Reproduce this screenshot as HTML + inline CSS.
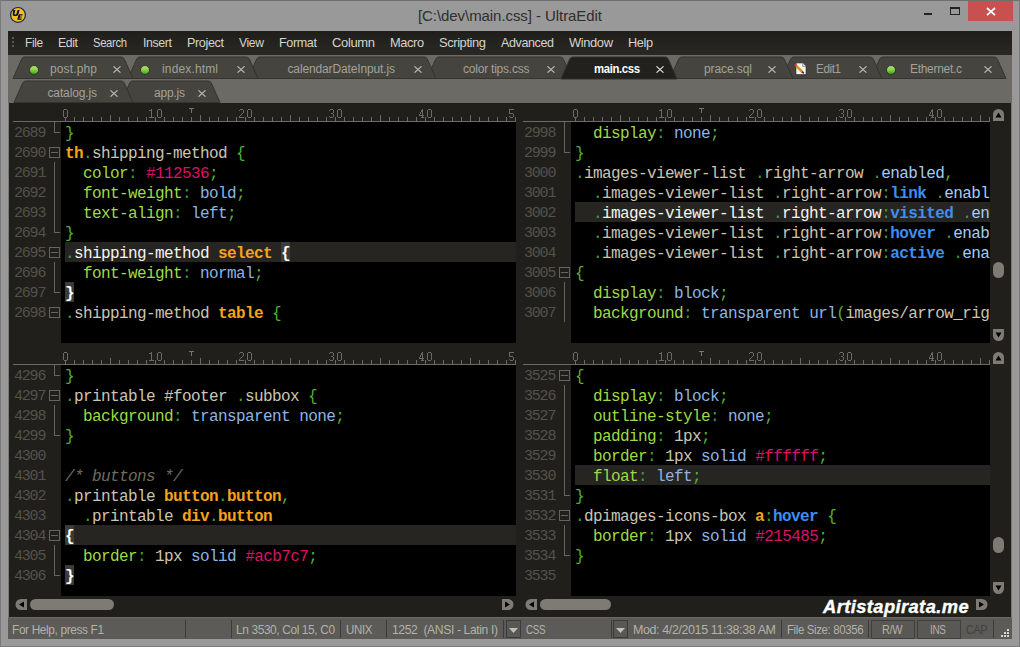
<!DOCTYPE html>
<html><head><meta charset="utf-8"><title>UltraEdit</title><style>
*{margin:0;padding:0;box-sizing:border-box}
html,body{width:1020px;height:647px;overflow:hidden;background:#999999;position:relative;font-family:"Liberation Sans",sans-serif}
div,i,svg{position:absolute}
.ui{font-family:"Liberation Sans",sans-serif;white-space:nowrap}
.code{background:#000;overflow:hidden}
.cur{left:4px;right:0;height:20px;background:#262521}
.ln{left:4px;top:0;height:20px;line-height:20px;padding-top:2px;font-family:"Liberation Mono",monospace;font-size:16px;letter-spacing:-0.6px;white-space:pre;color:#d4d4cc}
.ln span{position:relative}
.s{color:#cbc5b2}.d{color:#3f9e3f}.b{color:#52b03a}.p{color:#9edb45}.c{color:#3c9c3e}.m{color:#56ac3a}
.t{color:#f5a21e;font-weight:bold}.v{color:#8db4e2}.h{color:#d81269}.ps{color:#3d8ff0;font-weight:bold}
.co{color:#6f6b62;font-style:italic}.e{color:#a6cbf2}.n{color:#cbc5b2}
span.bh{color:#fff;font-weight:bold}
.lc .s{color:#f6f6f2}
i.bh{top:0;width:9px;height:20px;background:#3c3b37}
.lnum{width:31px;text-align:right;height:20px;line-height:20px;font-family:"Liberation Mono",monospace;font-size:15px;letter-spacing:-1.2px;color:#53524d}
.fbox{width:11px;height:11px;border:1px solid #66645e}
.fbox:after{content:"";position:absolute;left:1px;top:4px;width:7px;height:1px;background:#66645e}
.fv{width:1px;background:#66645e}
.fh{height:1px;background:#66645e}
.rline{height:1px;background:#6c6a64}
.rtick{width:1px;background:#6c6a64}
.rnum{width:41px;text-align:center;font-family:"Liberation Sans",sans-serif;font-size:13px;line-height:20px;letter-spacing:0.6px;text-indent:0.6px;color:#6c6a64;transform:scaleX(0.82);transform-origin:20.5px 0}
.rT{width:5px;height:6px;border-top:1px solid #77756e}
.rT:after{content:"";position:absolute;left:2px;top:0;width:1px;height:4px;background:#77756e}
.thumb{background:#7d7b74}
</style></head>
<body>
<div style="left:0;top:0;width:1020px;height:1px;background:#6f6f6f"></div>
<div style="left:0;top:0;width:1px;height:647px;background:#7a7a7a"></div>
<div style="left:1019px;top:0;width:1px;height:647px;background:#7a7a7a"></div>
<div style="left:0;top:646px;width:1020px;height:1px;background:#7a7a7a"></div>
<div class="ui" style="left:418.00px;top:6px;font-size:15px;line-height:20px;color:#2e2e2e;letter-spacing:-0.067px;">[C:\dev\main.css] - UltraEdit</div>
<div style="left:968px;top:1px;width:45px;height:20px;background:#c75050"></div>
<svg style="left:986px;top:7px" width="10" height="9"><path d="M1 1 L9 8.2 M9 1 L1 8.2" stroke="#fff" stroke-width="1.7"/></svg>
<div style="left:950px;top:7px;width:10px;height:8px;border:1px solid #222;border-top-width:2px"></div>
<div style="left:924px;top:13px;width:8px;height:2px;background:#222"></div>
<svg style="left:8px;top:5px" width="20" height="20"><circle cx="10" cy="9.9" r="7.4" fill="#efbf1c" stroke="#20204a" stroke-width="1.2"/><path d="M5.2 5.0 L7.4 5.0 L6.4 8.7 Q6.2 9.4 6.9 9.4 L7.6 9.4 Q8.3 9.4 8.5 8.7 L9.5 5.0 L11.6 5.0 L10.4 9.3 Q10.0 10.9 8.3 10.9 L6.2 10.9 Q4.3 10.9 4.7 9.2 Z" fill="#0c0c30"/><path d="M10.7 9.3 L14.7 9.3 L14.4 10.6 L12.1 10.6 L11.9 11.4 L13.9 11.4 L13.6 12.6 L11.6 12.6 L11.4 13.5 L13.7 13.5 L13.4 14.8 L9.2 14.8 Z" fill="#0c0c30"/></svg>
<div style="left:8px;top:31px;width:1004px;height:24px;background:linear-gradient(#1f1e1b,#292824)"></div>
<div style="left:12px;top:37px;width:2px;height:2px;background:#5a5852"></div>
<div style="left:12px;top:41px;width:2px;height:2px;background:#5a5852"></div>
<div style="left:12px;top:45px;width:2px;height:2px;background:#5a5852"></div>
<div class="ui" style="left:25.00px;top:33px;font-size:13px;line-height:20px;color:#d4d4cc;letter-spacing:-0.400px;transform:scaleX(0.9117);transform-origin:0 0;">File</div>
<div class="ui" style="left:58.00px;top:33px;font-size:13px;line-height:20px;color:#d4d4cc;letter-spacing:-0.400px;transform:scaleX(0.9434);transform-origin:0 0;">Edit</div>
<div class="ui" style="left:93.00px;top:33px;font-size:13px;line-height:20px;color:#d4d4cc;letter-spacing:-0.400px;transform:scaleX(0.8677);transform-origin:0 0;">Search</div>
<div class="ui" style="left:143.00px;top:33px;font-size:13px;line-height:20px;color:#d4d4cc;letter-spacing:-0.400px;transform:scaleX(0.9504);transform-origin:0 0;">Insert</div>
<div class="ui" style="left:187.00px;top:33px;font-size:13px;line-height:20px;color:#d4d4cc;letter-spacing:-0.400px;transform:scaleX(0.9723);transform-origin:0 0;">Project</div>
<div class="ui" style="left:239.00px;top:33px;font-size:13px;line-height:20px;color:#d4d4cc;letter-spacing:-0.400px;transform:scaleX(0.9337);transform-origin:0 0;">View</div>
<div class="ui" style="left:279.00px;top:33px;font-size:13px;line-height:20px;color:#d4d4cc;letter-spacing:-0.400px;transform:scaleX(0.9701);transform-origin:0 0;">Format</div>
<div class="ui" style="left:332.00px;top:33px;font-size:13px;line-height:20px;color:#d4d4cc;letter-spacing:-0.360px;">Column</div>
<div class="ui" style="left:390.00px;top:33px;font-size:13px;line-height:20px;color:#d4d4cc;letter-spacing:-0.400px;transform:scaleX(0.9851);transform-origin:0 0;">Macro</div>
<div class="ui" style="left:439.00px;top:33px;font-size:13px;line-height:20px;color:#d4d4cc;letter-spacing:-0.400px;transform:scaleX(0.9919);transform-origin:0 0;">Scripting</div>
<div class="ui" style="left:501.00px;top:33px;font-size:13px;line-height:20px;color:#d4d4cc;letter-spacing:-0.400px;transform:scaleX(0.9632);transform-origin:0 0;">Advanced</div>
<div class="ui" style="left:569.00px;top:33px;font-size:13px;line-height:20px;color:#d4d4cc;letter-spacing:-0.400px;transform:scaleX(0.9940);transform-origin:0 0;">Window</div>
<div class="ui" style="left:628.00px;top:33px;font-size:13px;line-height:20px;color:#d4d4cc;letter-spacing:-0.400px;transform:scaleX(0.9788);transform-origin:0 0;">Help</div>
<div style="left:8px;top:55px;width:1004px;height:48px;background:#6b6a65"></div>
<svg style="left:871px;top:57px;overflow:visible" width="135" height="21.5"><path d="M0 21.5 L8.6 2.2 Q9.7 0 11.6 0 L123.4 0 Q125.3 0 126.4 2.2 L135 21.5 Z" fill="#45443f" stroke="#31302c" stroke-width="0.9"/></svg>
<svg style="left:782px;top:57px;overflow:visible" width="100" height="21.5"><path d="M0 21.5 L8.6 2.2 Q9.7 0 11.6 0 L88.4 0 Q90.3 0 91.4 2.2 L100 21.5 Z" fill="#45443f" stroke="#31302c" stroke-width="0.9"/></svg>
<svg style="left:670px;top:57px;overflow:visible" width="123" height="21.5"><path d="M0 21.5 L8.6 2.2 Q9.7 0 11.6 0 L111.4 0 Q113.3 0 114.4 2.2 L123 21.5 Z" fill="#45443f" stroke="#31302c" stroke-width="0.9"/></svg>
<svg style="left:427px;top:57px;overflow:visible" width="145" height="21.5"><path d="M0 21.5 L8.6 2.2 Q9.7 0 11.6 0 L133.4 0 Q135.3 0 136.4 2.2 L145 21.5 Z" fill="#45443f" stroke="#31302c" stroke-width="0.9"/></svg>
<svg style="left:248px;top:57px;overflow:visible" width="188" height="21.5"><path d="M0 21.5 L8.6 2.2 Q9.7 0 11.6 0 L176.4 0 Q178.3 0 179.4 2.2 L188 21.5 Z" fill="#45443f" stroke="#31302c" stroke-width="0.9"/></svg>
<svg style="left:128px;top:57px;overflow:visible" width="130" height="21.5"><path d="M0 21.5 L8.6 2.2 Q9.7 0 11.6 0 L118.4 0 Q120.3 0 121.4 2.2 L130 21.5 Z" fill="#45443f" stroke="#31302c" stroke-width="0.9"/></svg>
<svg style="left:13px;top:57px;overflow:visible" width="120" height="21.5"><path d="M0 21.5 L8.6 2.2 Q9.7 0 11.6 0 L108.4 0 Q110.3 0 111.4 2.2 L120 21.5 Z" fill="#45443f" stroke="#31302c" stroke-width="0.9"/></svg>
<svg style="left:561px;top:57px;overflow:visible" width="116" height="22"><path d="M0 22 L8.6 2.2 Q9.7 0 11.6 0 L104.4 0 Q106.3 0 107.4 2.2 L116 22 Z" fill="#22211d" stroke="#31302c" stroke-width="0.9"/></svg>
<svg style="left:121px;top:81px;overflow:visible" width="99" height="21.5"><path d="M0 21.5 L8.6 2.2 Q9.7 0 11.6 0 L87.4 0 Q89.3 0 90.4 2.2 L99 21.5 Z" fill="#45443f" stroke="#31302c" stroke-width="0.9"/></svg>
<svg style="left:14px;top:81px;overflow:visible" width="119" height="21.5"><path d="M0 21.5 L8.6 2.2 Q9.7 0 11.6 0 L107.4 0 Q109.3 0 110.4 2.2 L119 21.5 Z" fill="#45443f" stroke="#31302c" stroke-width="0.9"/></svg>
<svg width="0" height="0"><defs><linearGradient id="gd" x1="0" y1="0" x2="0" y2="1"><stop offset="0" stop-color="#b8e070"/><stop offset="0.5" stop-color="#8cd048"/><stop offset="1" stop-color="#2e9a14"/></linearGradient></defs></svg>
<svg style="left:28px;top:63.6px" width="12" height="12"><circle cx="6" cy="6" r="4.5" fill="url(#gd)" stroke="#2c2b27" stroke-width="0.9"/></svg>
<div class="ui" style="left:50.00px;top:59px;font-size:12px;line-height:20px;color:#a2a29a;letter-spacing:0.138px;">post.php</div>
<svg style="left:113px;top:66px" width="8" height="7"><path d="M0.5 0.3 L7.5 6.7 M7.5 0.3 L0.5 6.7" stroke="#bcbcb4" stroke-width="1.1"/></svg>
<svg style="left:139px;top:63.6px" width="12" height="12"><circle cx="6" cy="6" r="4.5" fill="url(#gd)" stroke="#2c2b27" stroke-width="0.9"/></svg>
<div class="ui" style="left:162.00px;top:59px;font-size:12px;line-height:20px;color:#a2a29a;letter-spacing:0.145px;">index.html</div>
<svg style="left:237px;top:66px" width="8" height="7"><path d="M0.5 0.3 L7.5 6.7 M7.5 0.3 L0.5 6.7" stroke="#bcbcb4" stroke-width="1.1"/></svg>
<div class="ui" style="left:287.50px;top:59px;font-size:12px;line-height:20px;color:#a2a29a;letter-spacing:-0.135px;">calendarDateInput.js</div>
<svg style="left:414px;top:66px" width="8" height="7"><path d="M0.5 0.3 L7.5 6.7 M7.5 0.3 L0.5 6.7" stroke="#bcbcb4" stroke-width="1.1"/></svg>
<div class="ui" style="left:463.00px;top:59px;font-size:12px;line-height:20px;color:#a2a29a;letter-spacing:-0.219px;">color tips.css</div>
<svg style="left:547px;top:66px" width="8" height="7"><path d="M0.5 0.3 L7.5 6.7 M7.5 0.3 L0.5 6.7" stroke="#bcbcb4" stroke-width="1.1"/></svg>
<div class="ui" style="left:594.00px;top:59px;font-size:12px;line-height:20px;color:#ffffff;letter-spacing:-0.400px;transform:scaleX(0.9473);transform-origin:0 0;font-weight:bold;">main.css</div>
<svg style="left:656px;top:66px" width="8" height="7"><path d="M0.5 0.3 L7.5 6.7 M7.5 0.3 L0.5 6.7" stroke="#e0e0d8" stroke-width="1.1"/></svg>
<div class="ui" style="left:704.00px;top:59px;font-size:12px;line-height:20px;color:#a2a29a;letter-spacing:-0.087px;">prace.sql</div>
<svg style="left:768px;top:66px" width="8" height="7"><path d="M0.5 0.3 L7.5 6.7 M7.5 0.3 L0.5 6.7" stroke="#bcbcb4" stroke-width="1.1"/></svg>
<svg style="left:794px;top:62px" width="14" height="15"><path d="M1.8 0.8 L8.6 0.8 L12.2 4.4 L12.2 12.8 L1.8 12.8 Z" fill="#f6f6f2" stroke="#222" stroke-width="0.9"/><path d="M8.6 0.8 L8.6 4.4 L12.2 4.4" fill="#ddd" stroke="#666" stroke-width="0.6"/><path d="M2.2 3.8 L8.6 10.2" stroke="#e08a20" stroke-width="2.6"/><path d="M8.2 9.8 L9.8 11.4" stroke="#333" stroke-width="1.6"/><circle cx="1.6" cy="3" r="1.3" fill="#d83030"/></svg>
<div class="ui" style="left:816.00px;top:59px;font-size:12px;line-height:20px;color:#a2a29a;letter-spacing:-0.400px;transform:scaleX(0.9709);transform-origin:0 0;">Edit1</div>
<svg style="left:859px;top:66px" width="8" height="7"><path d="M0.5 0.3 L7.5 6.7 M7.5 0.3 L0.5 6.7" stroke="#bcbcb4" stroke-width="1.1"/></svg>
<svg style="left:885px;top:63.6px" width="12" height="12"><circle cx="6" cy="6" r="4.5" fill="url(#gd)" stroke="#2c2b27" stroke-width="0.9"/></svg>
<div class="ui" style="left:910.00px;top:59px;font-size:12px;line-height:20px;color:#a2a29a;letter-spacing:-0.300px;">Ethernet.c</div>
<svg style="left:984px;top:66px" width="8" height="7"><path d="M0.5 0.3 L7.5 6.7 M7.5 0.3 L0.5 6.7" stroke="#bcbcb4" stroke-width="1.1"/></svg>
<div class="ui" style="left:47.50px;top:83px;font-size:12px;line-height:20px;color:#a2a29a;letter-spacing:-0.133px;">catalog.js</div>
<svg style="left:110px;top:90px" width="8" height="7"><path d="M0.5 0.3 L7.5 6.7 M7.5 0.3 L0.5 6.7" stroke="#bcbcb4" stroke-width="1.1"/></svg>
<div class="ui" style="left:154.00px;top:83px;font-size:12px;line-height:20px;color:#a2a29a;letter-spacing:-0.203px;">app.js</div>
<svg style="left:198px;top:90px" width="8" height="7"><path d="M0.5 0.3 L7.5 6.7 M7.5 0.3 L0.5 6.7" stroke="#bcbcb4" stroke-width="1.1"/></svg>
<div style="left:9px;top:103px;width:1002px;height:514px;background:#201f1b"></div>
<div style="left:8px;top:103px;width:1px;height:514px;background:#7a7a79"></div>
<div style="left:1011px;top:103px;width:1px;height:514px;background:#7a7a79"></div>
<div class="code" style="left:61px;top:122px;width:455px;height:221px">
<div class="ln" style="top:0px"><span class="b">}</span></div>
<div class="ln" style="top:20px"><span class="t">th</span><span class="d">.</span><span class="s">shipping-method</span><span class="s"> </span><span class="b">{</span></div>
<div class="ln" style="top:40px"><span class="s">  </span><span class="p">color</span><span class="c">:</span><span class="s"> </span><span class="h">#112536</span><span class="m">;</span></div>
<div class="ln" style="top:60px"><span class="s">  </span><span class="p">font-weight</span><span class="c">:</span><span class="s"> </span><span class="v">bold</span><span class="m">;</span></div>
<div class="ln" style="top:80px"><span class="s">  </span><span class="p">text-align</span><span class="c">:</span><span class="s"> </span><span class="v">left</span><span class="m">;</span></div>
<div class="ln" style="top:100px"><span class="b">}</span></div>
<div class="cur" style="top:120px"></div>
<div class="ln lc" style="top:120px"><span class="d">.</span><span class="s">shipping-method</span><span class="s"> </span><span class="t">select</span><span class="s"> </span><i class="bh" style="left:216px"></i><span class="bh">{</span></div>
<div class="ln" style="top:140px"><span class="s">  </span><span class="p">font-weight</span><span class="c">:</span><span class="s"> </span><span class="v">normal</span><span class="m">;</span></div>
<div class="ln" style="top:160px"><i class="bh" style="left:0px"></i><span class="bh">}</span></div>
<div class="ln" style="top:180px"><span class="d">.</span><span class="s">shipping-method</span><span class="s"> </span><span class="t">table</span><span class="s"> </span><span class="b">{</span></div>
</div>
<div class="lnum" style="left:14px;top:124px">2689</div>
<div class="fv" style="left:54px;top:122px;height:10px"></div>
<div class="fh" style="left:54px;top:132px;width:6px"></div>
<div class="lnum" style="left:14px;top:144px">2690</div>
<div class="fbox" style="left:49px;top:147px"></div>
<div class="lnum" style="left:14px;top:164px">2691</div>
<div class="fv" style="left:54px;top:162px;height:20px"></div>
<div class="lnum" style="left:14px;top:184px">2692</div>
<div class="fv" style="left:54px;top:182px;height:20px"></div>
<div class="lnum" style="left:14px;top:204px">2693</div>
<div class="fv" style="left:54px;top:202px;height:20px"></div>
<div class="lnum" style="left:14px;top:224px">2694</div>
<div class="fv" style="left:54px;top:222px;height:10px"></div>
<div class="fh" style="left:54px;top:232px;width:6px"></div>
<div class="lnum" style="left:14px;top:244px">2695</div>
<div class="fbox" style="left:49px;top:247px"></div>
<div class="lnum" style="left:14px;top:264px">2696</div>
<div class="fv" style="left:54px;top:262px;height:20px"></div>
<div class="lnum" style="left:14px;top:284px">2697</div>
<div class="fv" style="left:54px;top:282px;height:10px"></div>
<div class="fh" style="left:54px;top:292px;width:6px"></div>
<div class="lnum" style="left:14px;top:304px">2698</div>
<div class="fbox" style="left:49px;top:307px"></div>
<div style="left:9px;top:103px;width:507px;height:19px;overflow:hidden">
<div class="rline" style="left:4px;top:18px;width:503px"></div>
<div class="rtick" style="left:56px;top:14px;height:4px"></div>
<div class="rtick" style="left:65px;top:14px;height:4px"></div>
<div class="rtick" style="left:74px;top:14px;height:4px"></div>
<div class="rtick" style="left:83px;top:14px;height:4px"></div>
<div class="rtick" style="left:92px;top:14px;height:4px"></div>
<div class="rtick" style="left:101px;top:12px;height:6px"></div>
<div class="rtick" style="left:110px;top:14px;height:4px"></div>
<div class="rtick" style="left:119px;top:14px;height:4px"></div>
<div class="rtick" style="left:128px;top:14px;height:4px"></div>
<div class="rtick" style="left:137px;top:14px;height:4px"></div>
<div class="rtick" style="left:146px;top:14px;height:4px"></div>
<div class="rtick" style="left:155px;top:14px;height:4px"></div>
<div class="rtick" style="left:164px;top:14px;height:4px"></div>
<div class="rtick" style="left:173px;top:14px;height:4px"></div>
<div class="rtick" style="left:182px;top:14px;height:4px"></div>
<div class="rtick" style="left:191px;top:12px;height:6px"></div>
<div class="rtick" style="left:200px;top:14px;height:4px"></div>
<div class="rtick" style="left:209px;top:14px;height:4px"></div>
<div class="rtick" style="left:218px;top:14px;height:4px"></div>
<div class="rtick" style="left:227px;top:14px;height:4px"></div>
<div class="rtick" style="left:236px;top:14px;height:4px"></div>
<div class="rtick" style="left:245px;top:14px;height:4px"></div>
<div class="rtick" style="left:254px;top:14px;height:4px"></div>
<div class="rtick" style="left:263px;top:14px;height:4px"></div>
<div class="rtick" style="left:272px;top:14px;height:4px"></div>
<div class="rtick" style="left:281px;top:12px;height:6px"></div>
<div class="rtick" style="left:290px;top:14px;height:4px"></div>
<div class="rtick" style="left:299px;top:14px;height:4px"></div>
<div class="rtick" style="left:308px;top:14px;height:4px"></div>
<div class="rtick" style="left:317px;top:14px;height:4px"></div>
<div class="rtick" style="left:326px;top:14px;height:4px"></div>
<div class="rtick" style="left:335px;top:14px;height:4px"></div>
<div class="rtick" style="left:344px;top:14px;height:4px"></div>
<div class="rtick" style="left:353px;top:14px;height:4px"></div>
<div class="rtick" style="left:362px;top:14px;height:4px"></div>
<div class="rtick" style="left:371px;top:12px;height:6px"></div>
<div class="rtick" style="left:380px;top:14px;height:4px"></div>
<div class="rtick" style="left:389px;top:14px;height:4px"></div>
<div class="rtick" style="left:398px;top:14px;height:4px"></div>
<div class="rtick" style="left:407px;top:14px;height:4px"></div>
<div class="rtick" style="left:416px;top:14px;height:4px"></div>
<div class="rtick" style="left:425px;top:14px;height:4px"></div>
<div class="rtick" style="left:434px;top:14px;height:4px"></div>
<div class="rtick" style="left:443px;top:14px;height:4px"></div>
<div class="rtick" style="left:452px;top:14px;height:4px"></div>
<div class="rtick" style="left:461px;top:12px;height:6px"></div>
<div class="rtick" style="left:470px;top:14px;height:4px"></div>
<div class="rtick" style="left:479px;top:14px;height:4px"></div>
<div class="rtick" style="left:488px;top:14px;height:4px"></div>
<div class="rtick" style="left:497px;top:14px;height:4px"></div>
<div class="rtick" style="left:506px;top:14px;height:4px"></div>
<div class="rtick" style="left:515px;top:14px;height:4px"></div>
<div class="rT" style="left:180px;top:5px"></div>
<svg style="left:0;top:0" width="507" height="19" shape-rendering="crispEdges"><path d="M55 6h1v1h-1zM56 6h1v1h-1zM57 6h1v1h-1zM54 7h1v1h-1zM58 7h1v1h-1zM54 8h1v1h-1zM58 8h1v1h-1zM54 9h1v1h-1zM58 9h1v1h-1zM54 10h1v1h-1zM58 10h1v1h-1zM54 11h1v1h-1zM58 11h1v1h-1zM54 12h1v1h-1zM58 12h1v1h-1zM54 13h1v1h-1zM58 13h1v1h-1zM55 14h1v1h-1zM56 14h1v1h-1zM57 14h1v1h-1zM142 6h1v1h-1zM140 7h1v1h-1zM141 7h1v1h-1zM142 7h1v1h-1zM142 8h1v1h-1zM142 9h1v1h-1zM142 10h1v1h-1zM142 11h1v1h-1zM142 12h1v1h-1zM142 13h1v1h-1zM140 14h1v1h-1zM141 14h1v1h-1zM142 14h1v1h-1zM143 14h1v1h-1zM144 14h1v1h-1zM149 6h1v1h-1zM150 6h1v1h-1zM151 6h1v1h-1zM148 7h1v1h-1zM152 7h1v1h-1zM148 8h1v1h-1zM152 8h1v1h-1zM148 9h1v1h-1zM152 9h1v1h-1zM148 10h1v1h-1zM152 10h1v1h-1zM148 11h1v1h-1zM152 11h1v1h-1zM148 12h1v1h-1zM152 12h1v1h-1zM148 13h1v1h-1zM152 13h1v1h-1zM149 14h1v1h-1zM150 14h1v1h-1zM151 14h1v1h-1zM231 6h1v1h-1zM232 6h1v1h-1zM233 6h1v1h-1zM230 7h1v1h-1zM234 7h1v1h-1zM234 8h1v1h-1zM234 9h1v1h-1zM233 10h1v1h-1zM232 11h1v1h-1zM231 12h1v1h-1zM230 13h1v1h-1zM230 14h1v1h-1zM231 14h1v1h-1zM232 14h1v1h-1zM233 14h1v1h-1zM234 14h1v1h-1zM239 6h1v1h-1zM240 6h1v1h-1zM241 6h1v1h-1zM238 7h1v1h-1zM242 7h1v1h-1zM238 8h1v1h-1zM242 8h1v1h-1zM238 9h1v1h-1zM242 9h1v1h-1zM238 10h1v1h-1zM242 10h1v1h-1zM238 11h1v1h-1zM242 11h1v1h-1zM238 12h1v1h-1zM242 12h1v1h-1zM238 13h1v1h-1zM242 13h1v1h-1zM239 14h1v1h-1zM240 14h1v1h-1zM241 14h1v1h-1zM321 6h1v1h-1zM322 6h1v1h-1zM323 6h1v1h-1zM320 7h1v1h-1zM324 7h1v1h-1zM324 8h1v1h-1zM324 9h1v1h-1zM322 10h1v1h-1zM323 10h1v1h-1zM324 11h1v1h-1zM324 12h1v1h-1zM320 13h1v1h-1zM324 13h1v1h-1zM321 14h1v1h-1zM322 14h1v1h-1zM323 14h1v1h-1zM329 6h1v1h-1zM330 6h1v1h-1zM331 6h1v1h-1zM328 7h1v1h-1zM332 7h1v1h-1zM328 8h1v1h-1zM332 8h1v1h-1zM328 9h1v1h-1zM332 9h1v1h-1zM328 10h1v1h-1zM332 10h1v1h-1zM328 11h1v1h-1zM332 11h1v1h-1zM328 12h1v1h-1zM332 12h1v1h-1zM328 13h1v1h-1zM332 13h1v1h-1zM329 14h1v1h-1zM330 14h1v1h-1zM331 14h1v1h-1zM413 6h1v1h-1zM412 7h1v1h-1zM413 7h1v1h-1zM412 8h1v1h-1zM413 8h1v1h-1zM411 9h1v1h-1zM413 9h1v1h-1zM411 10h1v1h-1zM413 10h1v1h-1zM410 11h1v1h-1zM413 11h1v1h-1zM410 12h1v1h-1zM411 12h1v1h-1zM412 12h1v1h-1zM413 12h1v1h-1zM414 12h1v1h-1zM413 13h1v1h-1zM412 14h1v1h-1zM413 14h1v1h-1zM414 14h1v1h-1zM419 6h1v1h-1zM420 6h1v1h-1zM421 6h1v1h-1zM418 7h1v1h-1zM422 7h1v1h-1zM418 8h1v1h-1zM422 8h1v1h-1zM418 9h1v1h-1zM422 9h1v1h-1zM418 10h1v1h-1zM422 10h1v1h-1zM418 11h1v1h-1zM422 11h1v1h-1zM418 12h1v1h-1zM422 12h1v1h-1zM418 13h1v1h-1zM422 13h1v1h-1zM419 14h1v1h-1zM420 14h1v1h-1zM421 14h1v1h-1zM500 6h1v1h-1zM501 6h1v1h-1zM502 6h1v1h-1zM503 6h1v1h-1zM504 6h1v1h-1zM500 7h1v1h-1zM500 8h1v1h-1zM500 9h1v1h-1zM500 10h1v1h-1zM501 10h1v1h-1zM502 10h1v1h-1zM503 10h1v1h-1zM504 11h1v1h-1zM504 12h1v1h-1zM500 13h1v1h-1zM504 13h1v1h-1zM501 14h1v1h-1zM502 14h1v1h-1zM503 14h1v1h-1zM509 6h1v1h-1zM510 6h1v1h-1zM511 6h1v1h-1zM508 7h1v1h-1zM512 7h1v1h-1zM508 8h1v1h-1zM512 8h1v1h-1zM508 9h1v1h-1zM512 9h1v1h-1zM508 10h1v1h-1zM512 10h1v1h-1zM508 11h1v1h-1zM512 11h1v1h-1zM508 12h1v1h-1zM512 12h1v1h-1zM508 13h1v1h-1zM512 13h1v1h-1zM509 14h1v1h-1zM510 14h1v1h-1zM511 14h1v1h-1z" fill="#6c6a64"/></svg>
</div>
<div class="code" style="left:571px;top:122px;width:419px;height:221px">
<div class="ln" style="top:0px"><span class="s">  </span><span class="p">display</span><span class="c">:</span><span class="s"> </span><span class="v">none</span><span class="m">;</span></div>
<div class="ln" style="top:20px"><span class="b">}</span></div>
<div class="ln" style="top:40px"><span class="d">.</span><span class="s">images-viewer-list</span><span class="s"> </span><span class="d">.</span><span class="s">right-arrow</span><span class="s"> </span><span class="d">.</span><span class="e">enabled</span><span class="m">,</span></div>
<div class="ln" style="top:60px"><span class="s">  </span><span class="d">.</span><span class="s">images-viewer-list</span><span class="s"> </span><span class="d">.</span><span class="s">right-arrow</span><span class="c">:</span><span class="ps">link</span><span class="s"> </span><span class="d">.</span><span class="e">enabl</span></div>
<div class="cur" style="top:80px"></div>
<div class="ln lc" style="top:80px"><span class="s">  </span><span class="d">.</span><span class="s">images-viewer-list</span><span class="s"> </span><span class="d">.</span><span class="s">right-arrow</span><span class="c">:</span><span class="ps">visited</span><span class="s"> </span><span class="d">.</span><span class="e">en</span></div>
<div class="ln" style="top:100px"><span class="s">  </span><span class="d">.</span><span class="s">images-viewer-list</span><span class="s"> </span><span class="d">.</span><span class="s">right-arrow</span><span class="c">:</span><span class="ps">hover</span><span class="s"> </span><span class="d">.</span><span class="e">enab</span></div>
<div class="ln" style="top:120px"><span class="s">  </span><span class="d">.</span><span class="s">images-viewer-list</span><span class="s"> </span><span class="d">.</span><span class="s">right-arrow</span><span class="c">:</span><span class="ps">active</span><span class="s"> </span><span class="d">.</span><span class="e">ena</span></div>
<div class="ln" style="top:140px"><span class="b">{</span></div>
<div class="ln" style="top:160px"><span class="s">  </span><span class="p">display</span><span class="c">:</span><span class="s"> </span><span class="v">block</span><span class="m">;</span></div>
<div class="ln" style="top:180px"><span class="s">  </span><span class="p">background</span><span class="c">:</span><span class="s"> </span><span class="v">transparent</span><span class="s"> </span><span class="v">url</span><span class="b">(</span><span class="s">images/arrow_rig</span></div>
</div>
<div class="lnum" style="left:524px;top:124px">2998</div>
<div class="fv" style="left:564px;top:122px;height:20px"></div>
<div class="lnum" style="left:524px;top:144px">2999</div>
<div class="fv" style="left:564px;top:142px;height:10px"></div>
<div class="fh" style="left:564px;top:152px;width:6px"></div>
<div class="lnum" style="left:524px;top:164px">3000</div>
<div class="lnum" style="left:524px;top:184px">3001</div>
<div class="lnum" style="left:524px;top:204px">3002</div>
<div class="lnum" style="left:524px;top:224px">3003</div>
<div class="lnum" style="left:524px;top:244px">3004</div>
<div class="lnum" style="left:524px;top:264px">3005</div>
<div class="fbox" style="left:559px;top:267px"></div>
<div class="lnum" style="left:524px;top:284px">3006</div>
<div class="fv" style="left:564px;top:282px;height:20px"></div>
<div class="lnum" style="left:524px;top:304px">3007</div>
<div class="fv" style="left:564px;top:302px;height:20px"></div>
<div style="left:519px;top:103px;width:471px;height:19px;overflow:hidden">
<div class="rline" style="left:4px;top:18px;width:467px"></div>
<div class="rtick" style="left:56px;top:14px;height:4px"></div>
<div class="rtick" style="left:65px;top:14px;height:4px"></div>
<div class="rtick" style="left:74px;top:14px;height:4px"></div>
<div class="rtick" style="left:83px;top:14px;height:4px"></div>
<div class="rtick" style="left:92px;top:14px;height:4px"></div>
<div class="rtick" style="left:101px;top:12px;height:6px"></div>
<div class="rtick" style="left:110px;top:14px;height:4px"></div>
<div class="rtick" style="left:119px;top:14px;height:4px"></div>
<div class="rtick" style="left:128px;top:14px;height:4px"></div>
<div class="rtick" style="left:137px;top:14px;height:4px"></div>
<div class="rtick" style="left:146px;top:14px;height:4px"></div>
<div class="rtick" style="left:155px;top:14px;height:4px"></div>
<div class="rtick" style="left:164px;top:14px;height:4px"></div>
<div class="rtick" style="left:173px;top:14px;height:4px"></div>
<div class="rtick" style="left:182px;top:14px;height:4px"></div>
<div class="rtick" style="left:191px;top:12px;height:6px"></div>
<div class="rtick" style="left:200px;top:14px;height:4px"></div>
<div class="rtick" style="left:209px;top:14px;height:4px"></div>
<div class="rtick" style="left:218px;top:14px;height:4px"></div>
<div class="rtick" style="left:227px;top:14px;height:4px"></div>
<div class="rtick" style="left:236px;top:14px;height:4px"></div>
<div class="rtick" style="left:245px;top:14px;height:4px"></div>
<div class="rtick" style="left:254px;top:14px;height:4px"></div>
<div class="rtick" style="left:263px;top:14px;height:4px"></div>
<div class="rtick" style="left:272px;top:14px;height:4px"></div>
<div class="rtick" style="left:281px;top:12px;height:6px"></div>
<div class="rtick" style="left:290px;top:14px;height:4px"></div>
<div class="rtick" style="left:299px;top:14px;height:4px"></div>
<div class="rtick" style="left:308px;top:14px;height:4px"></div>
<div class="rtick" style="left:317px;top:14px;height:4px"></div>
<div class="rtick" style="left:326px;top:14px;height:4px"></div>
<div class="rtick" style="left:335px;top:14px;height:4px"></div>
<div class="rtick" style="left:344px;top:14px;height:4px"></div>
<div class="rtick" style="left:353px;top:14px;height:4px"></div>
<div class="rtick" style="left:362px;top:14px;height:4px"></div>
<div class="rtick" style="left:371px;top:12px;height:6px"></div>
<div class="rtick" style="left:380px;top:14px;height:4px"></div>
<div class="rtick" style="left:389px;top:14px;height:4px"></div>
<div class="rtick" style="left:398px;top:14px;height:4px"></div>
<div class="rtick" style="left:407px;top:14px;height:4px"></div>
<div class="rtick" style="left:416px;top:14px;height:4px"></div>
<div class="rtick" style="left:425px;top:14px;height:4px"></div>
<div class="rtick" style="left:434px;top:14px;height:4px"></div>
<div class="rtick" style="left:443px;top:14px;height:4px"></div>
<div class="rtick" style="left:452px;top:14px;height:4px"></div>
<div class="rtick" style="left:461px;top:12px;height:6px"></div>
<div class="rtick" style="left:470px;top:14px;height:4px"></div>
<div class="rtick" style="left:479px;top:14px;height:4px"></div>
<div class="rT" style="left:180px;top:5px"></div>
<svg style="left:0;top:0" width="471" height="19" shape-rendering="crispEdges"><path d="M55 6h1v1h-1zM56 6h1v1h-1zM57 6h1v1h-1zM54 7h1v1h-1zM58 7h1v1h-1zM54 8h1v1h-1zM58 8h1v1h-1zM54 9h1v1h-1zM58 9h1v1h-1zM54 10h1v1h-1zM58 10h1v1h-1zM54 11h1v1h-1zM58 11h1v1h-1zM54 12h1v1h-1zM58 12h1v1h-1zM54 13h1v1h-1zM58 13h1v1h-1zM55 14h1v1h-1zM56 14h1v1h-1zM57 14h1v1h-1zM142 6h1v1h-1zM140 7h1v1h-1zM141 7h1v1h-1zM142 7h1v1h-1zM142 8h1v1h-1zM142 9h1v1h-1zM142 10h1v1h-1zM142 11h1v1h-1zM142 12h1v1h-1zM142 13h1v1h-1zM140 14h1v1h-1zM141 14h1v1h-1zM142 14h1v1h-1zM143 14h1v1h-1zM144 14h1v1h-1zM149 6h1v1h-1zM150 6h1v1h-1zM151 6h1v1h-1zM148 7h1v1h-1zM152 7h1v1h-1zM148 8h1v1h-1zM152 8h1v1h-1zM148 9h1v1h-1zM152 9h1v1h-1zM148 10h1v1h-1zM152 10h1v1h-1zM148 11h1v1h-1zM152 11h1v1h-1zM148 12h1v1h-1zM152 12h1v1h-1zM148 13h1v1h-1zM152 13h1v1h-1zM149 14h1v1h-1zM150 14h1v1h-1zM151 14h1v1h-1zM231 6h1v1h-1zM232 6h1v1h-1zM233 6h1v1h-1zM230 7h1v1h-1zM234 7h1v1h-1zM234 8h1v1h-1zM234 9h1v1h-1zM233 10h1v1h-1zM232 11h1v1h-1zM231 12h1v1h-1zM230 13h1v1h-1zM230 14h1v1h-1zM231 14h1v1h-1zM232 14h1v1h-1zM233 14h1v1h-1zM234 14h1v1h-1zM239 6h1v1h-1zM240 6h1v1h-1zM241 6h1v1h-1zM238 7h1v1h-1zM242 7h1v1h-1zM238 8h1v1h-1zM242 8h1v1h-1zM238 9h1v1h-1zM242 9h1v1h-1zM238 10h1v1h-1zM242 10h1v1h-1zM238 11h1v1h-1zM242 11h1v1h-1zM238 12h1v1h-1zM242 12h1v1h-1zM238 13h1v1h-1zM242 13h1v1h-1zM239 14h1v1h-1zM240 14h1v1h-1zM241 14h1v1h-1zM321 6h1v1h-1zM322 6h1v1h-1zM323 6h1v1h-1zM320 7h1v1h-1zM324 7h1v1h-1zM324 8h1v1h-1zM324 9h1v1h-1zM322 10h1v1h-1zM323 10h1v1h-1zM324 11h1v1h-1zM324 12h1v1h-1zM320 13h1v1h-1zM324 13h1v1h-1zM321 14h1v1h-1zM322 14h1v1h-1zM323 14h1v1h-1zM329 6h1v1h-1zM330 6h1v1h-1zM331 6h1v1h-1zM328 7h1v1h-1zM332 7h1v1h-1zM328 8h1v1h-1zM332 8h1v1h-1zM328 9h1v1h-1zM332 9h1v1h-1zM328 10h1v1h-1zM332 10h1v1h-1zM328 11h1v1h-1zM332 11h1v1h-1zM328 12h1v1h-1zM332 12h1v1h-1zM328 13h1v1h-1zM332 13h1v1h-1zM329 14h1v1h-1zM330 14h1v1h-1zM331 14h1v1h-1zM413 6h1v1h-1zM412 7h1v1h-1zM413 7h1v1h-1zM412 8h1v1h-1zM413 8h1v1h-1zM411 9h1v1h-1zM413 9h1v1h-1zM411 10h1v1h-1zM413 10h1v1h-1zM410 11h1v1h-1zM413 11h1v1h-1zM410 12h1v1h-1zM411 12h1v1h-1zM412 12h1v1h-1zM413 12h1v1h-1zM414 12h1v1h-1zM413 13h1v1h-1zM412 14h1v1h-1zM413 14h1v1h-1zM414 14h1v1h-1zM419 6h1v1h-1zM420 6h1v1h-1zM421 6h1v1h-1zM418 7h1v1h-1zM422 7h1v1h-1zM418 8h1v1h-1zM422 8h1v1h-1zM418 9h1v1h-1zM422 9h1v1h-1zM418 10h1v1h-1zM422 10h1v1h-1zM418 11h1v1h-1zM422 11h1v1h-1zM418 12h1v1h-1zM422 12h1v1h-1zM418 13h1v1h-1zM422 13h1v1h-1zM419 14h1v1h-1zM420 14h1v1h-1zM421 14h1v1h-1z" fill="#6c6a64"/></svg>
</div>
<div class="code" style="left:61px;top:365px;width:455px;height:231px">
<div class="ln" style="top:0px"><span class="b">}</span></div>
<div class="ln" style="top:20px"><span class="d">.</span><span class="s">printable #footer </span><span class="d">.</span><span class="s">subbox</span><span class="s"> </span><span class="b">{</span></div>
<div class="ln" style="top:40px"><span class="s">  </span><span class="p">background</span><span class="c">:</span><span class="s"> </span><span class="v">transparent</span><span class="s"> </span><span class="v">none</span><span class="m">;</span></div>
<div class="ln" style="top:60px"><span class="b">}</span></div>
<div class="ln" style="top:80px"></div>
<div class="ln" style="top:100px"><span class="co">/* buttons */</span></div>
<div class="ln" style="top:120px"><span class="d">.</span><span class="s">printable</span><span class="s"> </span><span class="t">button</span><span class="d">.</span><span class="t">button</span><span class="m">,</span></div>
<div class="ln" style="top:140px"><span class="s">  </span><span class="d">.</span><span class="s">printable</span><span class="s"> </span><span class="t">div</span><span class="d">.</span><span class="t">button</span></div>
<div class="cur" style="top:160px"></div>
<div class="ln lc" style="top:160px"><i class="bh" style="left:0px"></i><span class="bh">{</span></div>
<div class="ln" style="top:180px"><span class="s">  </span><span class="p">border</span><span class="c">:</span><span class="s"> </span><span class="n">1px</span><span class="s"> </span><span class="v">solid</span><span class="s"> </span><span class="h">#acb7c7</span><span class="m">;</span></div>
<div class="ln" style="top:200px"><i class="bh" style="left:0px"></i><span class="bh">}</span></div>
</div>
<div class="lnum" style="left:14px;top:367px">4296</div>
<div class="fv" style="left:54px;top:365px;height:10px"></div>
<div class="fh" style="left:54px;top:375px;width:6px"></div>
<div class="lnum" style="left:14px;top:387px">4297</div>
<div class="fbox" style="left:49px;top:390px"></div>
<div class="lnum" style="left:14px;top:407px">4298</div>
<div class="fv" style="left:54px;top:405px;height:20px"></div>
<div class="lnum" style="left:14px;top:427px">4299</div>
<div class="fv" style="left:54px;top:425px;height:10px"></div>
<div class="fh" style="left:54px;top:435px;width:6px"></div>
<div class="lnum" style="left:14px;top:447px">4300</div>
<div class="lnum" style="left:14px;top:467px">4301</div>
<div class="lnum" style="left:14px;top:487px">4302</div>
<div class="lnum" style="left:14px;top:507px">4303</div>
<div class="lnum" style="left:14px;top:527px">4304</div>
<div class="fbox" style="left:49px;top:530px"></div>
<div class="lnum" style="left:14px;top:547px">4305</div>
<div class="fv" style="left:54px;top:545px;height:20px"></div>
<div class="lnum" style="left:14px;top:567px">4306</div>
<div class="fv" style="left:54px;top:565px;height:10px"></div>
<div class="fh" style="left:54px;top:575px;width:6px"></div>
<div style="left:9px;top:346px;width:507px;height:19px;overflow:hidden">
<div class="rline" style="left:4px;top:18px;width:503px"></div>
<div class="rtick" style="left:56px;top:14px;height:4px"></div>
<div class="rtick" style="left:65px;top:14px;height:4px"></div>
<div class="rtick" style="left:74px;top:14px;height:4px"></div>
<div class="rtick" style="left:83px;top:14px;height:4px"></div>
<div class="rtick" style="left:92px;top:14px;height:4px"></div>
<div class="rtick" style="left:101px;top:12px;height:6px"></div>
<div class="rtick" style="left:110px;top:14px;height:4px"></div>
<div class="rtick" style="left:119px;top:14px;height:4px"></div>
<div class="rtick" style="left:128px;top:14px;height:4px"></div>
<div class="rtick" style="left:137px;top:14px;height:4px"></div>
<div class="rtick" style="left:146px;top:14px;height:4px"></div>
<div class="rtick" style="left:155px;top:14px;height:4px"></div>
<div class="rtick" style="left:164px;top:14px;height:4px"></div>
<div class="rtick" style="left:173px;top:14px;height:4px"></div>
<div class="rtick" style="left:182px;top:14px;height:4px"></div>
<div class="rtick" style="left:191px;top:12px;height:6px"></div>
<div class="rtick" style="left:200px;top:14px;height:4px"></div>
<div class="rtick" style="left:209px;top:14px;height:4px"></div>
<div class="rtick" style="left:218px;top:14px;height:4px"></div>
<div class="rtick" style="left:227px;top:14px;height:4px"></div>
<div class="rtick" style="left:236px;top:14px;height:4px"></div>
<div class="rtick" style="left:245px;top:14px;height:4px"></div>
<div class="rtick" style="left:254px;top:14px;height:4px"></div>
<div class="rtick" style="left:263px;top:14px;height:4px"></div>
<div class="rtick" style="left:272px;top:14px;height:4px"></div>
<div class="rtick" style="left:281px;top:12px;height:6px"></div>
<div class="rtick" style="left:290px;top:14px;height:4px"></div>
<div class="rtick" style="left:299px;top:14px;height:4px"></div>
<div class="rtick" style="left:308px;top:14px;height:4px"></div>
<div class="rtick" style="left:317px;top:14px;height:4px"></div>
<div class="rtick" style="left:326px;top:14px;height:4px"></div>
<div class="rtick" style="left:335px;top:14px;height:4px"></div>
<div class="rtick" style="left:344px;top:14px;height:4px"></div>
<div class="rtick" style="left:353px;top:14px;height:4px"></div>
<div class="rtick" style="left:362px;top:14px;height:4px"></div>
<div class="rtick" style="left:371px;top:12px;height:6px"></div>
<div class="rtick" style="left:380px;top:14px;height:4px"></div>
<div class="rtick" style="left:389px;top:14px;height:4px"></div>
<div class="rtick" style="left:398px;top:14px;height:4px"></div>
<div class="rtick" style="left:407px;top:14px;height:4px"></div>
<div class="rtick" style="left:416px;top:14px;height:4px"></div>
<div class="rtick" style="left:425px;top:14px;height:4px"></div>
<div class="rtick" style="left:434px;top:14px;height:4px"></div>
<div class="rtick" style="left:443px;top:14px;height:4px"></div>
<div class="rtick" style="left:452px;top:14px;height:4px"></div>
<div class="rtick" style="left:461px;top:12px;height:6px"></div>
<div class="rtick" style="left:470px;top:14px;height:4px"></div>
<div class="rtick" style="left:479px;top:14px;height:4px"></div>
<div class="rtick" style="left:488px;top:14px;height:4px"></div>
<div class="rtick" style="left:497px;top:14px;height:4px"></div>
<div class="rtick" style="left:506px;top:14px;height:4px"></div>
<div class="rtick" style="left:515px;top:14px;height:4px"></div>
<div class="rT" style="left:180px;top:5px"></div>
<svg style="left:0;top:0" width="507" height="19" shape-rendering="crispEdges"><path d="M55 6h1v1h-1zM56 6h1v1h-1zM57 6h1v1h-1zM54 7h1v1h-1zM58 7h1v1h-1zM54 8h1v1h-1zM58 8h1v1h-1zM54 9h1v1h-1zM58 9h1v1h-1zM54 10h1v1h-1zM58 10h1v1h-1zM54 11h1v1h-1zM58 11h1v1h-1zM54 12h1v1h-1zM58 12h1v1h-1zM54 13h1v1h-1zM58 13h1v1h-1zM55 14h1v1h-1zM56 14h1v1h-1zM57 14h1v1h-1zM142 6h1v1h-1zM140 7h1v1h-1zM141 7h1v1h-1zM142 7h1v1h-1zM142 8h1v1h-1zM142 9h1v1h-1zM142 10h1v1h-1zM142 11h1v1h-1zM142 12h1v1h-1zM142 13h1v1h-1zM140 14h1v1h-1zM141 14h1v1h-1zM142 14h1v1h-1zM143 14h1v1h-1zM144 14h1v1h-1zM149 6h1v1h-1zM150 6h1v1h-1zM151 6h1v1h-1zM148 7h1v1h-1zM152 7h1v1h-1zM148 8h1v1h-1zM152 8h1v1h-1zM148 9h1v1h-1zM152 9h1v1h-1zM148 10h1v1h-1zM152 10h1v1h-1zM148 11h1v1h-1zM152 11h1v1h-1zM148 12h1v1h-1zM152 12h1v1h-1zM148 13h1v1h-1zM152 13h1v1h-1zM149 14h1v1h-1zM150 14h1v1h-1zM151 14h1v1h-1zM231 6h1v1h-1zM232 6h1v1h-1zM233 6h1v1h-1zM230 7h1v1h-1zM234 7h1v1h-1zM234 8h1v1h-1zM234 9h1v1h-1zM233 10h1v1h-1zM232 11h1v1h-1zM231 12h1v1h-1zM230 13h1v1h-1zM230 14h1v1h-1zM231 14h1v1h-1zM232 14h1v1h-1zM233 14h1v1h-1zM234 14h1v1h-1zM239 6h1v1h-1zM240 6h1v1h-1zM241 6h1v1h-1zM238 7h1v1h-1zM242 7h1v1h-1zM238 8h1v1h-1zM242 8h1v1h-1zM238 9h1v1h-1zM242 9h1v1h-1zM238 10h1v1h-1zM242 10h1v1h-1zM238 11h1v1h-1zM242 11h1v1h-1zM238 12h1v1h-1zM242 12h1v1h-1zM238 13h1v1h-1zM242 13h1v1h-1zM239 14h1v1h-1zM240 14h1v1h-1zM241 14h1v1h-1zM321 6h1v1h-1zM322 6h1v1h-1zM323 6h1v1h-1zM320 7h1v1h-1zM324 7h1v1h-1zM324 8h1v1h-1zM324 9h1v1h-1zM322 10h1v1h-1zM323 10h1v1h-1zM324 11h1v1h-1zM324 12h1v1h-1zM320 13h1v1h-1zM324 13h1v1h-1zM321 14h1v1h-1zM322 14h1v1h-1zM323 14h1v1h-1zM329 6h1v1h-1zM330 6h1v1h-1zM331 6h1v1h-1zM328 7h1v1h-1zM332 7h1v1h-1zM328 8h1v1h-1zM332 8h1v1h-1zM328 9h1v1h-1zM332 9h1v1h-1zM328 10h1v1h-1zM332 10h1v1h-1zM328 11h1v1h-1zM332 11h1v1h-1zM328 12h1v1h-1zM332 12h1v1h-1zM328 13h1v1h-1zM332 13h1v1h-1zM329 14h1v1h-1zM330 14h1v1h-1zM331 14h1v1h-1zM413 6h1v1h-1zM412 7h1v1h-1zM413 7h1v1h-1zM412 8h1v1h-1zM413 8h1v1h-1zM411 9h1v1h-1zM413 9h1v1h-1zM411 10h1v1h-1zM413 10h1v1h-1zM410 11h1v1h-1zM413 11h1v1h-1zM410 12h1v1h-1zM411 12h1v1h-1zM412 12h1v1h-1zM413 12h1v1h-1zM414 12h1v1h-1zM413 13h1v1h-1zM412 14h1v1h-1zM413 14h1v1h-1zM414 14h1v1h-1zM419 6h1v1h-1zM420 6h1v1h-1zM421 6h1v1h-1zM418 7h1v1h-1zM422 7h1v1h-1zM418 8h1v1h-1zM422 8h1v1h-1zM418 9h1v1h-1zM422 9h1v1h-1zM418 10h1v1h-1zM422 10h1v1h-1zM418 11h1v1h-1zM422 11h1v1h-1zM418 12h1v1h-1zM422 12h1v1h-1zM418 13h1v1h-1zM422 13h1v1h-1zM419 14h1v1h-1zM420 14h1v1h-1zM421 14h1v1h-1zM500 6h1v1h-1zM501 6h1v1h-1zM502 6h1v1h-1zM503 6h1v1h-1zM504 6h1v1h-1zM500 7h1v1h-1zM500 8h1v1h-1zM500 9h1v1h-1zM500 10h1v1h-1zM501 10h1v1h-1zM502 10h1v1h-1zM503 10h1v1h-1zM504 11h1v1h-1zM504 12h1v1h-1zM500 13h1v1h-1zM504 13h1v1h-1zM501 14h1v1h-1zM502 14h1v1h-1zM503 14h1v1h-1zM509 6h1v1h-1zM510 6h1v1h-1zM511 6h1v1h-1zM508 7h1v1h-1zM512 7h1v1h-1zM508 8h1v1h-1zM512 8h1v1h-1zM508 9h1v1h-1zM512 9h1v1h-1zM508 10h1v1h-1zM512 10h1v1h-1zM508 11h1v1h-1zM512 11h1v1h-1zM508 12h1v1h-1zM512 12h1v1h-1zM508 13h1v1h-1zM512 13h1v1h-1zM509 14h1v1h-1zM510 14h1v1h-1zM511 14h1v1h-1z" fill="#6c6a64"/></svg>
</div>
<div class="code" style="left:571px;top:365px;width:419px;height:231px">
<div class="ln" style="top:0px"><span class="b">{</span></div>
<div class="ln" style="top:20px"><span class="s">  </span><span class="p">display</span><span class="c">:</span><span class="s"> </span><span class="v">block</span><span class="m">;</span></div>
<div class="ln" style="top:40px"><span class="s">  </span><span class="p">outline-style</span><span class="c">:</span><span class="s"> </span><span class="v">none</span><span class="m">;</span></div>
<div class="ln" style="top:60px"><span class="s">  </span><span class="p">padding</span><span class="c">:</span><span class="s"> </span><span class="n">1px</span><span class="m">;</span></div>
<div class="ln" style="top:80px"><span class="s">  </span><span class="p">border</span><span class="c">:</span><span class="s"> </span><span class="n">1px</span><span class="s"> </span><span class="v">solid</span><span class="s"> </span><span class="h">#ffffff</span><span class="m">;</span></div>
<div class="cur" style="top:100px"></div>
<div class="ln lc" style="top:100px"><span class="s">  </span><span class="p">float</span><span class="c">:</span><span class="s"> </span><span class="v">left</span><span class="m">;</span></div>
<div class="ln" style="top:120px"><span class="b">}</span></div>
<div class="ln" style="top:140px"><span class="d">.</span><span class="s">dpimages-icons-box</span><span class="s"> </span><span class="t">a</span><span class="c">:</span><span class="ps">hover</span><span class="s"> </span><span class="b">{</span></div>
<div class="ln" style="top:160px"><span class="s">  </span><span class="p">border</span><span class="c">:</span><span class="s"> </span><span class="n">1px</span><span class="s"> </span><span class="v">solid</span><span class="s"> </span><span class="h">#215485</span><span class="m">;</span></div>
<div class="ln" style="top:180px"><span class="b">}</span></div>
<div class="ln" style="top:200px"></div>
</div>
<div class="lnum" style="left:524px;top:367px">3525</div>
<div class="fbox" style="left:559px;top:370px"></div>
<div class="lnum" style="left:524px;top:387px">3526</div>
<div class="fv" style="left:564px;top:385px;height:20px"></div>
<div class="lnum" style="left:524px;top:407px">3527</div>
<div class="fv" style="left:564px;top:405px;height:20px"></div>
<div class="lnum" style="left:524px;top:427px">3528</div>
<div class="fv" style="left:564px;top:425px;height:20px"></div>
<div class="lnum" style="left:524px;top:447px">3529</div>
<div class="fv" style="left:564px;top:445px;height:20px"></div>
<div class="lnum" style="left:524px;top:467px">3530</div>
<div class="fv" style="left:564px;top:465px;height:20px"></div>
<div class="lnum" style="left:524px;top:487px">3531</div>
<div class="fv" style="left:564px;top:485px;height:10px"></div>
<div class="fh" style="left:564px;top:495px;width:6px"></div>
<div class="lnum" style="left:524px;top:507px">3532</div>
<div class="fbox" style="left:559px;top:510px"></div>
<div class="lnum" style="left:524px;top:527px">3533</div>
<div class="fv" style="left:564px;top:525px;height:20px"></div>
<div class="lnum" style="left:524px;top:547px">3534</div>
<div class="fv" style="left:564px;top:545px;height:10px"></div>
<div class="fh" style="left:564px;top:555px;width:6px"></div>
<div class="lnum" style="left:524px;top:567px">3535</div>
<div style="left:519px;top:346px;width:471px;height:19px;overflow:hidden">
<div class="rline" style="left:4px;top:18px;width:467px"></div>
<div class="rtick" style="left:56px;top:14px;height:4px"></div>
<div class="rtick" style="left:65px;top:14px;height:4px"></div>
<div class="rtick" style="left:74px;top:14px;height:4px"></div>
<div class="rtick" style="left:83px;top:14px;height:4px"></div>
<div class="rtick" style="left:92px;top:14px;height:4px"></div>
<div class="rtick" style="left:101px;top:12px;height:6px"></div>
<div class="rtick" style="left:110px;top:14px;height:4px"></div>
<div class="rtick" style="left:119px;top:14px;height:4px"></div>
<div class="rtick" style="left:128px;top:14px;height:4px"></div>
<div class="rtick" style="left:137px;top:14px;height:4px"></div>
<div class="rtick" style="left:146px;top:14px;height:4px"></div>
<div class="rtick" style="left:155px;top:14px;height:4px"></div>
<div class="rtick" style="left:164px;top:14px;height:4px"></div>
<div class="rtick" style="left:173px;top:14px;height:4px"></div>
<div class="rtick" style="left:182px;top:14px;height:4px"></div>
<div class="rtick" style="left:191px;top:12px;height:6px"></div>
<div class="rtick" style="left:200px;top:14px;height:4px"></div>
<div class="rtick" style="left:209px;top:14px;height:4px"></div>
<div class="rtick" style="left:218px;top:14px;height:4px"></div>
<div class="rtick" style="left:227px;top:14px;height:4px"></div>
<div class="rtick" style="left:236px;top:14px;height:4px"></div>
<div class="rtick" style="left:245px;top:14px;height:4px"></div>
<div class="rtick" style="left:254px;top:14px;height:4px"></div>
<div class="rtick" style="left:263px;top:14px;height:4px"></div>
<div class="rtick" style="left:272px;top:14px;height:4px"></div>
<div class="rtick" style="left:281px;top:12px;height:6px"></div>
<div class="rtick" style="left:290px;top:14px;height:4px"></div>
<div class="rtick" style="left:299px;top:14px;height:4px"></div>
<div class="rtick" style="left:308px;top:14px;height:4px"></div>
<div class="rtick" style="left:317px;top:14px;height:4px"></div>
<div class="rtick" style="left:326px;top:14px;height:4px"></div>
<div class="rtick" style="left:335px;top:14px;height:4px"></div>
<div class="rtick" style="left:344px;top:14px;height:4px"></div>
<div class="rtick" style="left:353px;top:14px;height:4px"></div>
<div class="rtick" style="left:362px;top:14px;height:4px"></div>
<div class="rtick" style="left:371px;top:12px;height:6px"></div>
<div class="rtick" style="left:380px;top:14px;height:4px"></div>
<div class="rtick" style="left:389px;top:14px;height:4px"></div>
<div class="rtick" style="left:398px;top:14px;height:4px"></div>
<div class="rtick" style="left:407px;top:14px;height:4px"></div>
<div class="rtick" style="left:416px;top:14px;height:4px"></div>
<div class="rtick" style="left:425px;top:14px;height:4px"></div>
<div class="rtick" style="left:434px;top:14px;height:4px"></div>
<div class="rtick" style="left:443px;top:14px;height:4px"></div>
<div class="rtick" style="left:452px;top:14px;height:4px"></div>
<div class="rtick" style="left:461px;top:12px;height:6px"></div>
<div class="rtick" style="left:470px;top:14px;height:4px"></div>
<div class="rtick" style="left:479px;top:14px;height:4px"></div>
<div class="rT" style="left:180px;top:5px"></div>
<svg style="left:0;top:0" width="471" height="19" shape-rendering="crispEdges"><path d="M55 6h1v1h-1zM56 6h1v1h-1zM57 6h1v1h-1zM54 7h1v1h-1zM58 7h1v1h-1zM54 8h1v1h-1zM58 8h1v1h-1zM54 9h1v1h-1zM58 9h1v1h-1zM54 10h1v1h-1zM58 10h1v1h-1zM54 11h1v1h-1zM58 11h1v1h-1zM54 12h1v1h-1zM58 12h1v1h-1zM54 13h1v1h-1zM58 13h1v1h-1zM55 14h1v1h-1zM56 14h1v1h-1zM57 14h1v1h-1zM142 6h1v1h-1zM140 7h1v1h-1zM141 7h1v1h-1zM142 7h1v1h-1zM142 8h1v1h-1zM142 9h1v1h-1zM142 10h1v1h-1zM142 11h1v1h-1zM142 12h1v1h-1zM142 13h1v1h-1zM140 14h1v1h-1zM141 14h1v1h-1zM142 14h1v1h-1zM143 14h1v1h-1zM144 14h1v1h-1zM149 6h1v1h-1zM150 6h1v1h-1zM151 6h1v1h-1zM148 7h1v1h-1zM152 7h1v1h-1zM148 8h1v1h-1zM152 8h1v1h-1zM148 9h1v1h-1zM152 9h1v1h-1zM148 10h1v1h-1zM152 10h1v1h-1zM148 11h1v1h-1zM152 11h1v1h-1zM148 12h1v1h-1zM152 12h1v1h-1zM148 13h1v1h-1zM152 13h1v1h-1zM149 14h1v1h-1zM150 14h1v1h-1zM151 14h1v1h-1zM231 6h1v1h-1zM232 6h1v1h-1zM233 6h1v1h-1zM230 7h1v1h-1zM234 7h1v1h-1zM234 8h1v1h-1zM234 9h1v1h-1zM233 10h1v1h-1zM232 11h1v1h-1zM231 12h1v1h-1zM230 13h1v1h-1zM230 14h1v1h-1zM231 14h1v1h-1zM232 14h1v1h-1zM233 14h1v1h-1zM234 14h1v1h-1zM239 6h1v1h-1zM240 6h1v1h-1zM241 6h1v1h-1zM238 7h1v1h-1zM242 7h1v1h-1zM238 8h1v1h-1zM242 8h1v1h-1zM238 9h1v1h-1zM242 9h1v1h-1zM238 10h1v1h-1zM242 10h1v1h-1zM238 11h1v1h-1zM242 11h1v1h-1zM238 12h1v1h-1zM242 12h1v1h-1zM238 13h1v1h-1zM242 13h1v1h-1zM239 14h1v1h-1zM240 14h1v1h-1zM241 14h1v1h-1zM321 6h1v1h-1zM322 6h1v1h-1zM323 6h1v1h-1zM320 7h1v1h-1zM324 7h1v1h-1zM324 8h1v1h-1zM324 9h1v1h-1zM322 10h1v1h-1zM323 10h1v1h-1zM324 11h1v1h-1zM324 12h1v1h-1zM320 13h1v1h-1zM324 13h1v1h-1zM321 14h1v1h-1zM322 14h1v1h-1zM323 14h1v1h-1zM329 6h1v1h-1zM330 6h1v1h-1zM331 6h1v1h-1zM328 7h1v1h-1zM332 7h1v1h-1zM328 8h1v1h-1zM332 8h1v1h-1zM328 9h1v1h-1zM332 9h1v1h-1zM328 10h1v1h-1zM332 10h1v1h-1zM328 11h1v1h-1zM332 11h1v1h-1zM328 12h1v1h-1zM332 12h1v1h-1zM328 13h1v1h-1zM332 13h1v1h-1zM329 14h1v1h-1zM330 14h1v1h-1zM331 14h1v1h-1zM413 6h1v1h-1zM412 7h1v1h-1zM413 7h1v1h-1zM412 8h1v1h-1zM413 8h1v1h-1zM411 9h1v1h-1zM413 9h1v1h-1zM411 10h1v1h-1zM413 10h1v1h-1zM410 11h1v1h-1zM413 11h1v1h-1zM410 12h1v1h-1zM411 12h1v1h-1zM412 12h1v1h-1zM413 12h1v1h-1zM414 12h1v1h-1zM413 13h1v1h-1zM412 14h1v1h-1zM413 14h1v1h-1zM414 14h1v1h-1zM419 6h1v1h-1zM420 6h1v1h-1zM421 6h1v1h-1zM418 7h1v1h-1zM422 7h1v1h-1zM418 8h1v1h-1zM422 8h1v1h-1zM418 9h1v1h-1zM422 9h1v1h-1zM418 10h1v1h-1zM422 10h1v1h-1zM418 11h1v1h-1zM422 11h1v1h-1zM418 12h1v1h-1zM422 12h1v1h-1zM418 13h1v1h-1zM422 13h1v1h-1zM419 14h1v1h-1zM420 14h1v1h-1zM421 14h1v1h-1z" fill="#6c6a64"/></svg>
</div>
<svg style="left:993px;top:109px" width="11" height="12"><path d="M0 12 L0 5.5 A5.5 5.5 0 0 1 11 5.5 L11 12 Z" fill="#7d7b74"/><path d="M2.5 8.5 L8.5 8.5 L5.5 3.5 Z" fill="#000"/></svg>
<svg style="left:993px;top:329px" width="11" height="12"><path d="M0 0 L0 6.5 A5.5 5.5 0 0 0 11 6.5 L11 0 Z" fill="#7d7b74"/><path d="M2.5 3.5 L8.5 3.5 L5.5 8.5 Z" fill="#000"/></svg>
<div class="thumb" style="left:993px;top:262px;width:11px;height:16px;border-radius:5.5px"></div>
<svg style="left:993px;top:352px" width="11" height="12"><path d="M0 12 L0 5.5 A5.5 5.5 0 0 1 11 5.5 L11 12 Z" fill="#7d7b74"/><path d="M2.5 8.5 L8.5 8.5 L5.5 3.5 Z" fill="#000"/></svg>
<svg style="left:993px;top:582px" width="11" height="12"><path d="M0 0 L0 6.5 A5.5 5.5 0 0 0 11 6.5 L11 0 Z" fill="#7d7b74"/><path d="M2.5 3.5 L8.5 3.5 L5.5 8.5 Z" fill="#000"/></svg>
<div class="thumb" style="left:993px;top:537px;width:11px;height:16px;border-radius:5.5px"></div>
<svg style="left:15px;top:599px" width="12" height="11"><path d="M12 0 L6 0 A5.5 5.5 0 0 0 6 11 L12 11 Z" fill="#7d7b74"/><path d="M9 2.5 L9 8.5 L4 5.5 Z" fill="#000"/></svg>
<svg style="left:502px;top:599px" width="12" height="11"><path d="M0 0 L6 0 A5.5 5.5 0 0 1 6 11 L0 11 Z" fill="#7d7b74"/><path d="M3 2.5 L3 8.5 L8 5.5 Z" fill="#000"/></svg>
<div class="thumb" style="left:30px;top:599px;width:84px;height:11px;border-radius:5.5px"></div>
<svg style="left:525px;top:599px" width="12" height="11"><path d="M12 0 L6 0 A5.5 5.5 0 0 0 6 11 L12 11 Z" fill="#7d7b74"/><path d="M9 2.5 L9 8.5 L4 5.5 Z" fill="#000"/></svg>
<svg style="left:976px;top:599px" width="12" height="11"><path d="M0 0 L6 0 A5.5 5.5 0 0 1 6 11 L0 11 Z" fill="#7d7b74"/><path d="M3 2.5 L3 8.5 L8 5.5 Z" fill="#000"/></svg>
<div class="thumb" style="left:540px;top:599px;width:71px;height:11px;border-radius:5.5px"></div>
<div class="ui" style="left:823.38px;top:597px;font-size:18px;line-height:20px;color:#ffffff;letter-spacing:0.400px;transform:scaleX(1.0179);transform-origin:0 0;font-weight:bold;font-style:italic;-webkit-text-stroke:0.35px #fff;">Artistapirata.me</div>
<div style="left:8px;top:617px;width:1004px;height:22px;background:#5c5b57"></div>
<div style="left:8px;top:617px;width:1004px;height:1px;background:#6a6965"></div>
<div style="left:185px;top:620px;width:1px;height:18px;background:#3c3b38"></div>
<div style="left:231px;top:620px;width:1px;height:18px;background:#3c3b38"></div>
<div style="left:340px;top:620px;width:1px;height:18px;background:#3c3b38"></div>
<div style="left:386px;top:620px;width:1px;height:18px;background:#3c3b38"></div>
<div style="left:503px;top:620px;width:1px;height:18px;background:#3c3b38"></div>
<div style="left:611px;top:620px;width:1px;height:18px;background:#3c3b38"></div>
<div style="left:781px;top:620px;width:1px;height:18px;background:#3c3b38"></div>
<div style="left:868px;top:620px;width:1px;height:18px;background:#3c3b38"></div>
<div style="left:993px;top:620px;width:1px;height:18px;background:#3c3b38"></div>
<div class="ui" style="left:12.00px;top:620px;font-size:13px;line-height:20px;color:#b2b2aa;letter-spacing:-0.400px;transform:scaleX(0.9123);transform-origin:0 0;">For Help, press F1</div>
<div class="ui" style="left:236.00px;top:620px;font-size:13px;line-height:20px;color:#b2b2aa;letter-spacing:-0.400px;transform:scaleX(0.9130);transform-origin:0 0;">Ln 3530, Col 15, C0</div>
<div class="ui" style="left:345.50px;top:620px;font-size:13px;line-height:20px;color:#b2b2aa;letter-spacing:-0.400px;transform:scaleX(0.8876);transform-origin:0 0;">UNIX</div>
<div class="ui" style="left:392.00px;top:620px;font-size:13px;line-height:20px;color:#b2b2aa;letter-spacing:-0.400px;transform:scaleX(0.9322);transform-origin:0 0;">1252&nbsp; (ANSI - Latin I)</div>
<div class="ui" style="left:525.50px;top:620px;font-size:13px;line-height:20px;color:#b2b2aa;letter-spacing:-0.400px;transform:scaleX(0.7521);transform-origin:0 0;">CSS</div>
<div class="ui" style="left:632.50px;top:620px;font-size:13px;line-height:20px;color:#b2b2aa;letter-spacing:-0.400px;transform:scaleX(0.9587);transform-origin:0 0;">Mod: 4/2/2015 11:38:38 AM</div>
<div class="ui" style="left:786.50px;top:620px;font-size:13px;line-height:20px;color:#b2b2aa;letter-spacing:-0.400px;transform:scaleX(0.8771);transform-origin:0 0;">File Size: 80356</div>
<div style="left:506px;top:620px;width:15px;height:18px;border:1px solid #3c3b38;background:#595854"></div>
<svg style="left:509px;top:628px" width="10" height="5"><path d="M0 0 L9 0 L4.5 5 Z" fill="#c0c0b8"/></svg>
<div style="left:613px;top:620px;width:15px;height:18px;border:1px solid #3c3b38;background:#595854"></div>
<svg style="left:616px;top:628px" width="10" height="5"><path d="M0 0 L9 0 L4.5 5 Z" fill="#c0c0b8"/></svg>
<div style="left:871px;top:620px;width:44px;height:19px;border:1px solid #3f3e3a;background:#595854"></div>
<div style="left:917px;top:620px;width:44px;height:19px;border:1px solid #3f3e3a;background:#595854"></div>
<div class="ui" style="left:881.50px;top:620px;font-size:13px;line-height:20px;color:#b2b2aa;letter-spacing:-0.400px;transform:scaleX(0.8377);transform-origin:0 0;">R/W</div>
<div class="ui" style="left:930.00px;top:620px;font-size:13px;line-height:20px;color:#b2b2aa;letter-spacing:-0.400px;transform:scaleX(0.7666);transform-origin:0 0;">INS</div>
<div class="ui" style="left:965.50px;top:620px;font-size:13px;line-height:20px;color:#42413d;letter-spacing:-0.400px;transform:scaleX(0.8292);transform-origin:0 0;">CAP</div>
<div style="left:1007px;top:629px;width:2px;height:2px;background:#d8d8d0"></div>
<div style="left:1004px;top:632px;width:2px;height:2px;background:#d8d8d0"></div>
<div style="left:1007px;top:632px;width:2px;height:2px;background:#d8d8d0"></div>
<div style="left:1001px;top:635px;width:2px;height:2px;background:#d8d8d0"></div>
<div style="left:1004px;top:635px;width:2px;height:2px;background:#d8d8d0"></div>
<div style="left:1007px;top:635px;width:2px;height:2px;background:#d8d8d0"></div>
</body></html>
